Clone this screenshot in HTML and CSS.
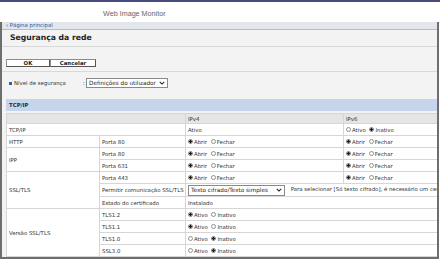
FILE: index.html
```html
<!DOCTYPE html>
<html lang="pt">
<head>
  <meta charset="UTF-8" />
  <title>Segurança da rede - Web Image Monitor</title>
  <link rel="stylesheet" href="styles.css">
</head>
<body>
  <div class="topline"></div>
  <header class="masthead">
    <span class="product">Web Image Monitor</span>
  </header>

  <div class="frame">
    <nav class="crumbs"><a href="#">‹ Página principal</a></nav>

    <main class="content">
      <h1 class="title">Segurança da rede</h1>

      <div class="actions">
        <button class="btn">OK</button><button class="btn">Cancelar</button>
      </div>

      <div class="level">
        <span class="bullet"></span>
        <span class="level-label">Nível de segurança</span>
        <span class="colon">:</span>
        <span class="fake-select level-select">Definições do utilizador
          <svg class="chev" viewBox="0 0 8 5"><polyline points="1,1 4,4 7,1" /></svg>
        </span>
      </div>

      <section class="group">
        <div class="group-head">TCP/IP</div>
        <table class="grid">
          <colgroup>
            <col class="c1"><col class="c2"><col class="c3"><col class="c4">
          </colgroup>
          <tr class="head">
            <td colspan="2"></td>
            <td>IPv4</td>
            <td>IPv6</td>
          </tr>
          <tr>
            <td colspan="2">TCP/IP</td>
            <td>Ativo</td>
            <td><span class="radio"></span>Ativo <span class="radio on"></span>Inativo</td>
          </tr>
          <tr>
            <td>HTTP</td>
            <td>Porta 80</td>
            <td><span class="radio on"></span>Abrir <span class="radio"></span>Fechar</td>
            <td><span class="radio on"></span>Abrir <span class="radio"></span>Fechar</td>
          </tr>
          <tr>
            <td rowspan="2">IPP</td>
            <td>Porta 80</td>
            <td><span class="radio on"></span>Abrir <span class="radio"></span>Fechar</td>
            <td><span class="radio on"></span>Abrir <span class="radio"></span>Fechar</td>
          </tr>
          <tr>
            <td>Porta 631</td>
            <td><span class="radio on"></span>Abrir <span class="radio"></span>Fechar</td>
            <td><span class="radio on"></span>Abrir <span class="radio"></span>Fechar</td>
          </tr>
          <tr>
            <td rowspan="3">SSL/TLS</td>
            <td>Porta 443</td>
            <td><span class="radio on"></span>Abrir <span class="radio"></span>Fechar</td>
            <td><span class="radio on"></span>Abrir <span class="radio"></span>Fechar</td>
          </tr>
          <tr class="tall">
            <td>Permitir comunicação SSL/TLS</td>
            <td colspan="2">
              <span class="fake-select mode-select">Texto cifrado/Texto simples
                <svg class="chev" viewBox="0 0 8 5"><polyline points="1,1 4,4 7,1" /></svg>
              </span>
              <span class="hint">Para selecionar [Só texto cifrado], é necessário um certificado.</span>
            </td>
          </tr>
          <tr>
            <td>Estado do certificado</td>
            <td colspan="2">Instalado</td>
          </tr>
          <tr>
            <td rowspan="4">Versão SSL/TLS</td>
            <td>TLS1.2</td>
            <td colspan="2"><span class="radio on"></span>Ativo <span class="radio"></span>Inativo</td>
          </tr>
          <tr>
            <td>TLS1.1</td>
            <td colspan="2"><span class="radio on"></span>Ativo <span class="radio"></span>Inativo</td>
          </tr>
          <tr>
            <td>TLS1.0</td>
            <td colspan="2"><span class="radio"></span>Ativo <span class="radio on"></span>Inativo</td>
          </tr>
          <tr>
            <td>SSL3.0</td>
            <td colspan="2"><span class="radio"></span>Ativo <span class="radio on"></span>Inativo</td>
          </tr>
        </table>
      </section>
    </main>
  </div>
</body>
</html>
```

FILE: styles.css
```css
* {
  box-sizing: border-box;
}

body {
  margin: 0;
  background: #fff;
  font-family: 'DejaVu Sans', Verdana, sans-serif;
  font-size: 5.4px;
  color: #333;
  overflow: hidden;
}

.topline {
  height: 2px;
  background: #464d7e;
}

.masthead {
  height: 20px;
  padding: 3px 0 0 103px;
}

.product {
  font-family: 'Liberation Sans', Arial, sans-serif;
  font-size: 7.2px;
  line-height: 17px;
  color: #666;
}

.frame {
  width: 439px;
  height: 237px;
  border-left: 2px solid #6e6e6e;
  border-right: 2px solid #6e6e6e;
  border-bottom: 2px solid #6e6e6e;
  background: #f3f3f3;
  overflow: hidden;
}

.crumbs {
  height: 8px;
  background: #e3e6eb;
  border-bottom: 1px solid #b9bcc2;
  padding-left: 4px;
  line-height: 7px;
}

.crumbs a {
  color: #2f52a0;
  text-decoration: none;
}

.content {
  overflow: hidden;
}

.title {
  margin: 0;
  height: 17px;
  padding-left: 8px;
  border-bottom: 1px solid #d9d9d9;
  font-size: 7.7px;
  line-height: 16px;
  color: #222;
}

.actions {
  height: 25px;
  padding: 12px 0 0 4px;
  border-bottom: 1px solid #d9d9d9;
  display: flex;
}

.btn {
  width: 44px;
  height: 8px;
  padding: 0;
  margin: 0;
  background: #fff;
  border: 1px solid #8c8c8c;
  border-right-color: #555;
  border-bottom-color: #555;
  font-family: 'DejaVu Sans', Verdana, sans-serif;
  font-weight: bold;
  font-size: 5.4px;
  line-height: 6px;
  color: #222;
}

.btn + .btn {
  width: 46px;
}

.level {
  height: 27px;
  padding: 6px 0 0 7px;
  display: flex;
  align-items: flex-start;
}

.bullet {
  width: 3px;
  height: 3px;
  margin-top: 3.5px;
  background: #3b5b9c;
}

.level-label {
  width: 69px;
  margin-left: 2px;
  line-height: 10px;
}

.colon {
  width: 3px;
  line-height: 10px;
}

.fake-select {
  display: inline-flex;
  align-items: center;
  justify-content: space-between;
  background: #fff;
  border: 1px solid #8a8a8a;
  padding: 0 2px;
  font-size: 5.7px;
  white-space: nowrap;
  color: #222;
}

.level-select {
  width: 82px;
  height: 10px;
}

.mode-select {
  width: 97px;
  height: 11px;
  vertical-align: middle;
}

.chev {
  width: 6px;
  height: 4px;
  fill: none;
  stroke: #222;
  stroke-width: 1.4;
}

.group-head {
  height: 12px;
  margin-bottom: 2px;
  margin-left: 4px;
  padding-left: 3px;
  background: #c6d5eb;
  font-weight: bold;
  line-height: 12px;
  color: #2b2b2b;
}

.grid {
  margin-left: 4px;
  width: 467px;
  table-layout: fixed;
  border-collapse: collapse;
  background: #fff;
}

.grid .c1 { width: 93px; }
.grid .c2 { width: 86px; }
.grid .c3 { width: 158px; }
.grid .c4 { width: 130px; }

.grid td {
  height: 12px;
  padding: 0 2px;
  border: 1px solid #d6d6d6;
  line-height: 10px;
  white-space: nowrap;
  vertical-align: middle;
}

.grid .head td {
  height: 10px;
  line-height: 8px;
  background: #e5e5e5;
}

.grid .tall td {
  height: 13px;
}

.hint {
  margin-left: 4px;
}

.radio {
  display: inline-block;
  width: 5px;
  height: 5px;
  margin-right: 1px;
  border: 1px solid #8f8f8f;
  border-radius: 50%;
  background: #fff;
  vertical-align: -0.5px;
}

.radio.on {
  background: radial-gradient(circle, #1e1e1e 0 1.2px, #fff 1.6px);
}

td .radio:not(:first-child) {
  margin-left: 2px;
}
```
